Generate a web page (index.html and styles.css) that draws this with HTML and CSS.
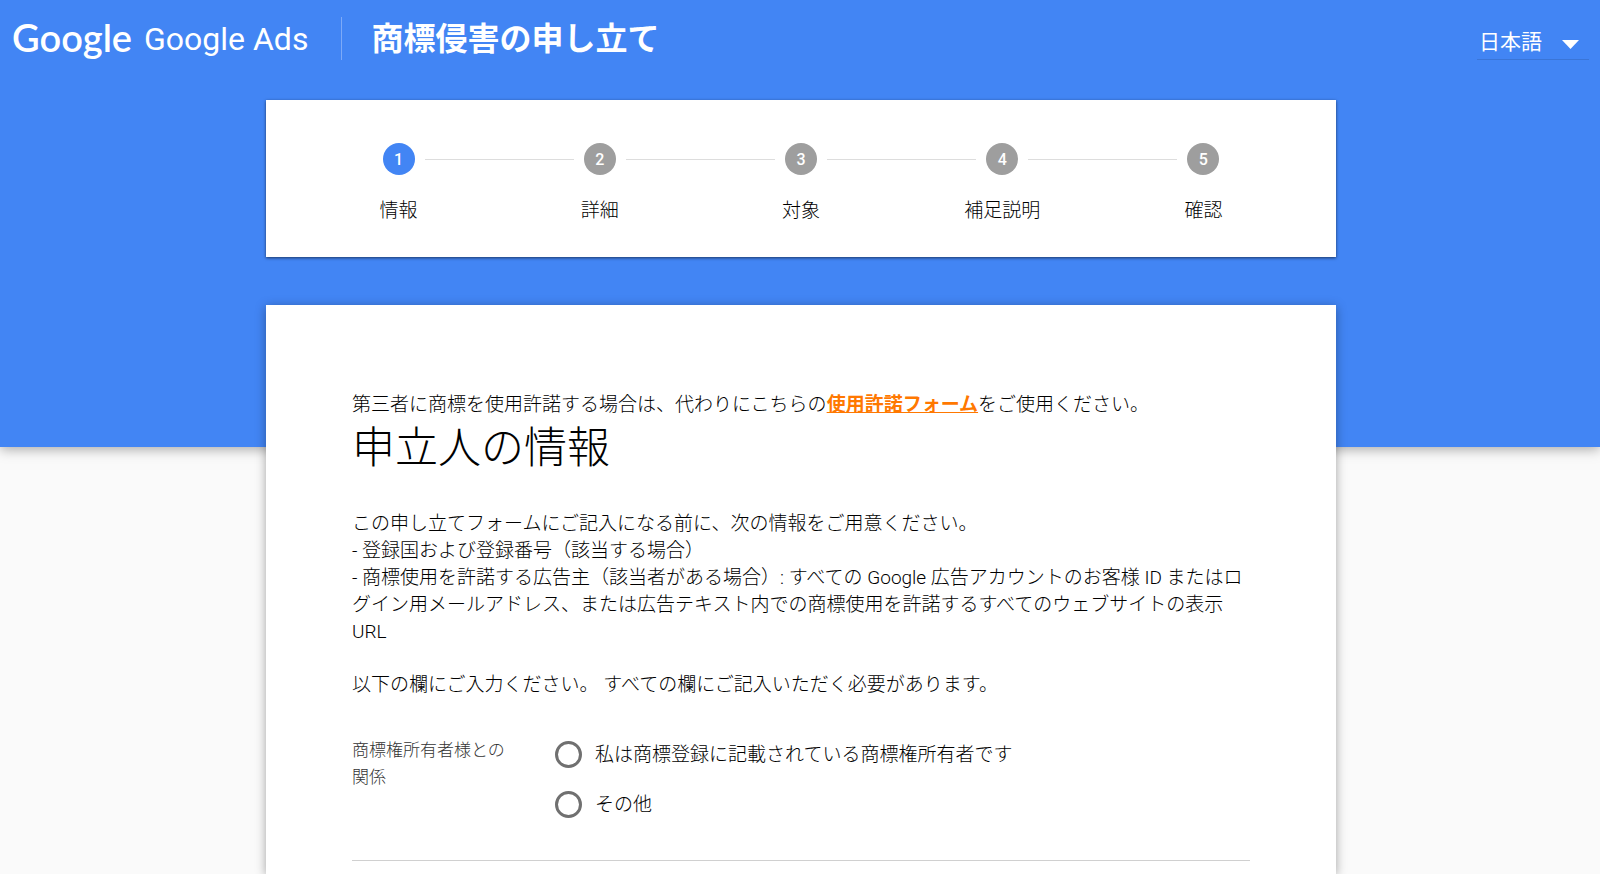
FILE: index.html
```html
<!DOCTYPE html>
<html lang="ja">
<head>
<meta charset="utf-8">
<title>商標侵害の申し立て</title>
<link rel="stylesheet" href="styles.css">
</head>
<body>
<div class="backdrop"></div>
<div class="page">
  <header class="topbar">
    <div class="brand"><span class="logo">Google</span><span class="product">Google Ads</span></div>
    <h1 class="title">商標侵害の申し立て</h1>
    <div class="language">
      <select class="language-select" aria-label="言語">
        <option>日本語</option>
      </select>
      <svg class="language-arrow" width="17" height="9" viewBox="0 0 17 9" aria-hidden="true"><path d="M0 0h17L8.500 9z" fill="#fff"/></svg>
    </div>
  </header>
  <main class="content">
    <ol class="card steps">
      <li class="step current"><span class="dot">1</span><span class="step-name">情報</span></li>
      <li class="step"><span class="dot">2</span><span class="step-name">詳細</span></li>
      <li class="step"><span class="dot">3</span><span class="step-name">対象</span></li>
      <li class="step"><span class="dot">4</span><span class="step-name">補足説明</span></li>
      <li class="step"><span class="dot">5</span><span class="step-name">確認</span></li>
    </ol>
    <form class="card form">
      <p class="text">第三者に商標を使用許諾する場合は、代わりにこちらの<a class="link" href="#">使用許諾フォーム</a>をご使用ください。</p>
      <h2 class="heading">申立人の情報</h2>
      <p class="text">この申し立てフォームにご記入になる前に、次の情報をご用意ください。<br>- 登録国および登録番号（該当する場合）<br>- 商標使用を許諾する広告主（該当者がある場合）: すべての Google 広告アカウントのお客様 ID またはログイン用メールアドレス、または広告テキスト内での商標使用を許諾するすべてのウェブサイトの表示 URL</p>
      <p class="text instruction">以下の欄にご入力ください。 すべての欄にご記入いただく必要があります。</p>
      <div class="field" role="radiogroup" aria-labelledby="relation">
        <div class="field-name" id="relation">商標権所有者様との関係</div>
        <div class="options">
          <label class="option"><input class="radio" type="radio" name="relation"><span>私は商標登録に記載されている商標権所有者です</span></label>
          <label class="option"><input class="radio" type="radio" name="relation"><span>その他</span></label>
        </div>
      </div>
    </form>
  </main>
</div>
</body>
</html>
```
FILE: styles.css
```css
* { box-sizing: border-box; }

body {
  margin: 0;
  background: #fafafa;
  color: #000;
  font-family: Roboto, "Noto Sans CJK JP", sans-serif;
  font-size: 19px;
  font-weight: 300;
  line-height: 27px;
}

.backdrop {
  position: absolute;
  top: 0;
  left: 0;
  z-index: -1;
  width: 100%;
  height: 447px;
  background: #4285f4;
  box-shadow: 0 2px 12px rgba(0, 0, 0, 0.35);
}

.page {
  display: flex;
  flex-direction: column;
  min-height: 100vh;
  padding-left: 2px;
}

.topbar {
  display: flex;
  align-items: flex-start;
  padding: 17px 11px 0 10px;
  height: 100px;
  color: #fff;
}

.brand {
  display: flex;
  align-items: flex-start;
  gap: 12px;
  height: 43px;
  padding-right: 33px;
  border-right: 1px solid #7daaf8;
}

.logo {
  font-family: Lato, sans-serif;
  font-size: 38px;
  font-weight: 600;
  line-height: 40px;
}

.product {
  font-size: 32px;
  font-weight: 400;
  line-height: 45px;
}

.title {
  margin: 0 auto 0 29px;
  font-size: 32px;
  font-weight: 700;
  line-height: 45px;
}

.language {
  position: relative;
  width: 112px;
  margin-top: 7px;
  border-bottom: 1px solid #3a75d7;
}

.language-select {
  display: block;
  width: 100%;
  height: 35px;
  padding: 0 2px;
  border: 0;
  appearance: none;
  background: transparent;
  color: #fff;
  font-family: inherit;
  font-size: 21px;
  font-weight: 400;
}

.language-arrow {
  position: absolute;
  top: 16px;
  right: 10px;
  pointer-events: none;
}

.content {
  display: flex;
  flex: 1;
  flex-direction: column;
  gap: 48px;
  width: 100%;
  max-width: 1070px;
  margin: 0 auto;
}

.card {
  margin: 0;
  background: #fff;
  box-shadow: 0 1px 3px rgba(0, 0, 0, 0.6);
}

.steps {
  display: grid;
  grid-template-columns: repeat(5, 1fr);
  padding: 43px 32px 33px;
  list-style: none;
}

.step {
  display: grid;
  grid-template-columns: 1fr 32px 1fr;
  align-items: center;
  column-gap: 10px;
  row-gap: 22px;
}

.step::before,
.step::after {
  content: "";
  height: 1px;
  background: #ddd;
}

.step::before { order: 1; }
.dot { order: 2; }
.step::after { order: 3; }
.step:first-child::before,
.step:last-child::after { background: none; }

.dot {
  height: 32px;
  border-radius: 50%;
  background: #9e9e9e;
  color: #fff;
  font-size: 16px;
  font-weight: 500;
  line-height: 33px;
  text-align: center;
}

.current .dot { background: #4285f4; }

.step-name {
  order: 4;
  grid-column: 1 / -1;
  text-align: center;
}

.form {
  flex: 1;
  padding: 86px 86px 0;
  box-shadow: 0 2px 10px rgba(0, 0, 0, 0.35);
}

.text { margin: 0; }

.link {
  color: #ff7800;
  font-weight: 700;
}

.heading {
  margin: 0 0 32px;
  font-size: 43px;
  font-weight: 300;
  line-height: 60px;
}

.instruction { margin-top: 26px; }

.field {
  display: grid;
  grid-template-columns: 160px 1fr;
  column-gap: 43px;
  margin-top: 39px;
  padding-bottom: 42px;
  border-bottom: 1px solid #d0d0d0;
}

.field-name {
  color: #333;
  font-size: 17px;
}

.options {
  display: grid;
  gap: 23px;
  padding-top: 4px;
}

.option {
  display: flex;
  align-items: center;
  gap: 13px;
}

.radio {
  width: 27px;
  height: 27px;
  margin: 0;
  border: 3px solid #707070;
  border-radius: 50%;
  appearance: none;
}

.radio:checked { background: radial-gradient(#4285f4 50%, transparent 55%); }
```
